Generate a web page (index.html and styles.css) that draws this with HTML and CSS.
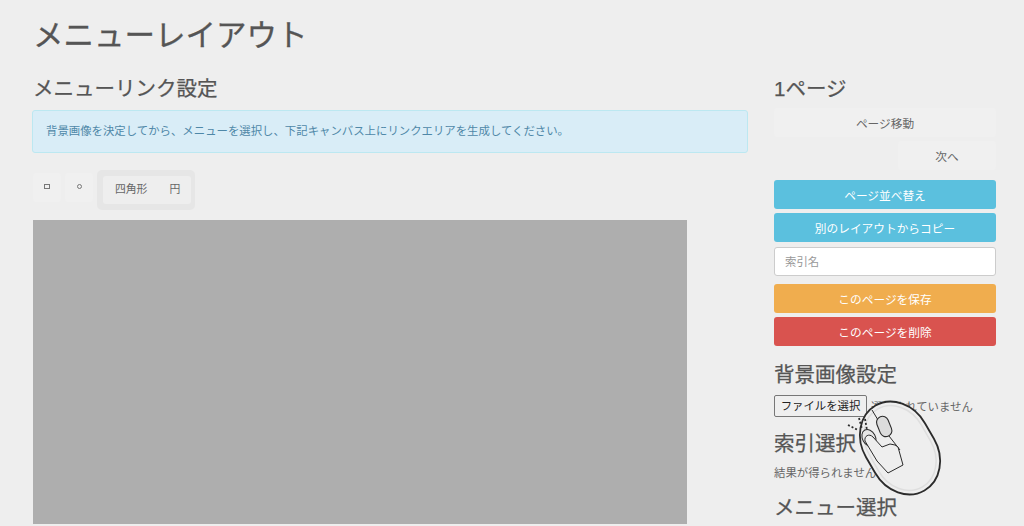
FILE: index.html
```html
<!DOCTYPE html>
<html lang="ja">
<head>
    <meta charset="UTF-8">
    <title>メニューレイアウト</title>
    <link rel="stylesheet" href="styles.css">
</head>
<body>
    <div class="page">
        <h1>メニューレイアウト</h1>
        <div class="columns">
            <div class="main">
                <h2>メニューリンク設定</h2>
                <div class="alert">背景画像を決定してから、メニューを選択し、下記キャンバス上にリンクエリアを生成してください。</div>
                <div class="tools">
                    <button class="btn tool"><span class="shape-square"></span></button>
                    <button class="btn tool"><span class="shape-circle"></span></button>
                    <div class="tool-group">
                        <div class="tool-group-inner">
                            <span>四角形</span>
                            <span>円</span>
                        </div>
                    </div>
                </div>
                <div class="canvas"></div>
            </div>
            <div class="side">
                <h3 class="page-title">1ページ</h3>
                <button class="btn plain page-move">ページ移動</button>
                <div class="next-row"><button class="btn plain next">次へ</button></div>
                <button class="btn info sort">ページ並べ替え</button>
                <button class="btn info copy">別のレイアウトからコピー</button>
                <input class="index-name" type="text" placeholder="索引名">
                <button class="btn warning">このページを保存</button>
                <button class="btn danger">このページを削除</button>
                <h3 class="bg-title">背景画像設定</h3>
                <div class="file-row">
                    <span class="file-button">ファイルを選択</span>
                    <span class="file-name">選択されていません</span>
                </div>
                <h3 class="index-title">索引選択</h3>
                <p class="no-result">結果が得られませんでした。</p>
                <h3 class="menu-title">メニュー選択</h3>
            </div>
        </div>
    </div>

    <svg class="mouse" viewBox="0 0 110 105" width="110" height="105" fill="none" stroke="#2b2b2b">
        <g transform="rotate(-30 60 53)">
            <rect x="26" y="4" width="68" height="98" rx="34" ry="40" fill="#eeeeee" stroke-width="1.8"/>
            <rect x="30" y="8" width="60" height="90" rx="30" ry="36" stroke="#dedede" stroke-width="1.5"/>
        </g>
        <path d="M32 15 L38 25 M49 41 L60 55" stroke-width="1"/>
        <rect x="38" y="21" width="12" height="21" rx="6" transform="rotate(-22 44 31)" fill="#dcdcdc" stroke-width="1.1"/>
        <ellipse cx="29" cy="43" rx="6.5" ry="9" transform="rotate(-28 29 43)" fill="#e6e6e6" stroke-width="1"/>
        <path d="M25 46 C24 41 29 38 33 42 L42 52 L50 49 L55 50 L58 52 L63 70 L48 78 L37 66 Z" fill="#eeeeee" stroke-width="1"/>
        <path d="M8 30 L18 35 M19 23 L22 34 M25 24 L27 35" stroke-width="1.8" stroke-dasharray="2 2"/>
    </svg>
</body>
</html>
```

FILE: styles.css
```css
* { box-sizing: border-box; }
html, body { height: 526px; overflow: hidden; }
body { margin: 0; background-color: #eee; color: #555; font-family: "Liberation Sans", "Noto Sans CJK JP", sans-serif; position: relative; }
.page { padding: 16px 28px 0 32px; }
h1 { margin: 0 0 0 1px; font-size: 30.5px; line-height: 38px; font-weight: 400; color: #555; -webkit-text-stroke: 0.3px #555; }
h2, h3 { margin: 0; font-weight: 400; color: #555; font-size: 20.5px; line-height: 28px; -webkit-text-stroke: 0.25px #555; }
.columns { display: flex; gap: 26px; margin-top: 20px; }
.main { width: 716px; flex: none; }
.side { width: 222px; flex: none; padding-top: 1px; }
h2 { margin: 1px 0 0 1px; }

.alert { margin-top: 7px; height: 43px; padding: 0 13px; line-height: 41px; font-size: 11.4px; color: #4f88a8; background: #d9edf7; border: 1px solid #bce8f1; border-radius: 3px; }

.tools { display: flex; align-items: flex-start; gap: 4px; margin: 17px 0 0 1px; height: 50px; }
.btn { display: block; border: 0; padding: 0; font-family: inherit; font-size: 11.7px; border-radius: 3px; text-align: center; }
.tool { width: 28px; height: 29px; margin-top: 3px; background: #f0f0f0; display: flex; align-items: center; justify-content: center; padding-bottom: 2px; }
.shape-square { width: 6px; height: 5px; border: 1px solid #777; }
.shape-circle { width: 5px; height: 5px; border: 1px solid #777; border-radius: 50%; }
.tool-group { width: 98px; height: 40px; padding: 6px 4px 6px 6px; background: #e6e6e6; border-radius: 5px; }
.tool-group-inner { display: flex; gap: 22px; height: 28px; padding-left: 12px; background: #eee; border-radius: 3px; font-size: 10.8px; line-height: 27px; color: #666; }

.canvas { width: 654px; height: 304px; margin-left: 1px; background: #aeaeae; }

.plain { background: #f0f0f0; color: #666; height: 29px; width: 100%; }
.page-move { margin-top: 5px; }
.next-row { display: flex; justify-content: flex-end; margin-top: 4px; }
.next { width: 98px; }
.info, .warning, .danger { width: 100%; height: 29px; color: #fff; }
.info { background: #5bc0de; }
.sort { margin-top: 10px; }
.copy { margin-top: 4px; }
.warning { background: #f0ad4e; margin-top: 8px; }
.danger { background: #d9534f; margin-top: 4px; }
.index-name { display: block; width: 100%; height: 29px; margin-top: 5px; padding: 0 10px; border: 1px solid #ccc; border-radius: 3px; background: #fff; font-family: inherit; font-size: 11.4px; }
.index-name::placeholder { color: #999; }

.bg-title { margin-top: 15px; }
.file-row { display: flex; align-items: center; gap: 4px; margin-top: 6px; font-size: 11.4px; }
.file-button { width: 93px; height: 22px; line-height: 20px; text-align: center; color: #222; background: #efefef; border: 1px solid #777; border-radius: 2px; }
.file-name { color: #666; }
.index-title { margin-top: 13px; }
.no-result { margin: 7px 0 0; font-size: 11.4px; line-height: 16px; color: #666; }
.menu-title { margin-top: 13px; }

.mouse { position: absolute; left: 840px; top: 395px; }
```
